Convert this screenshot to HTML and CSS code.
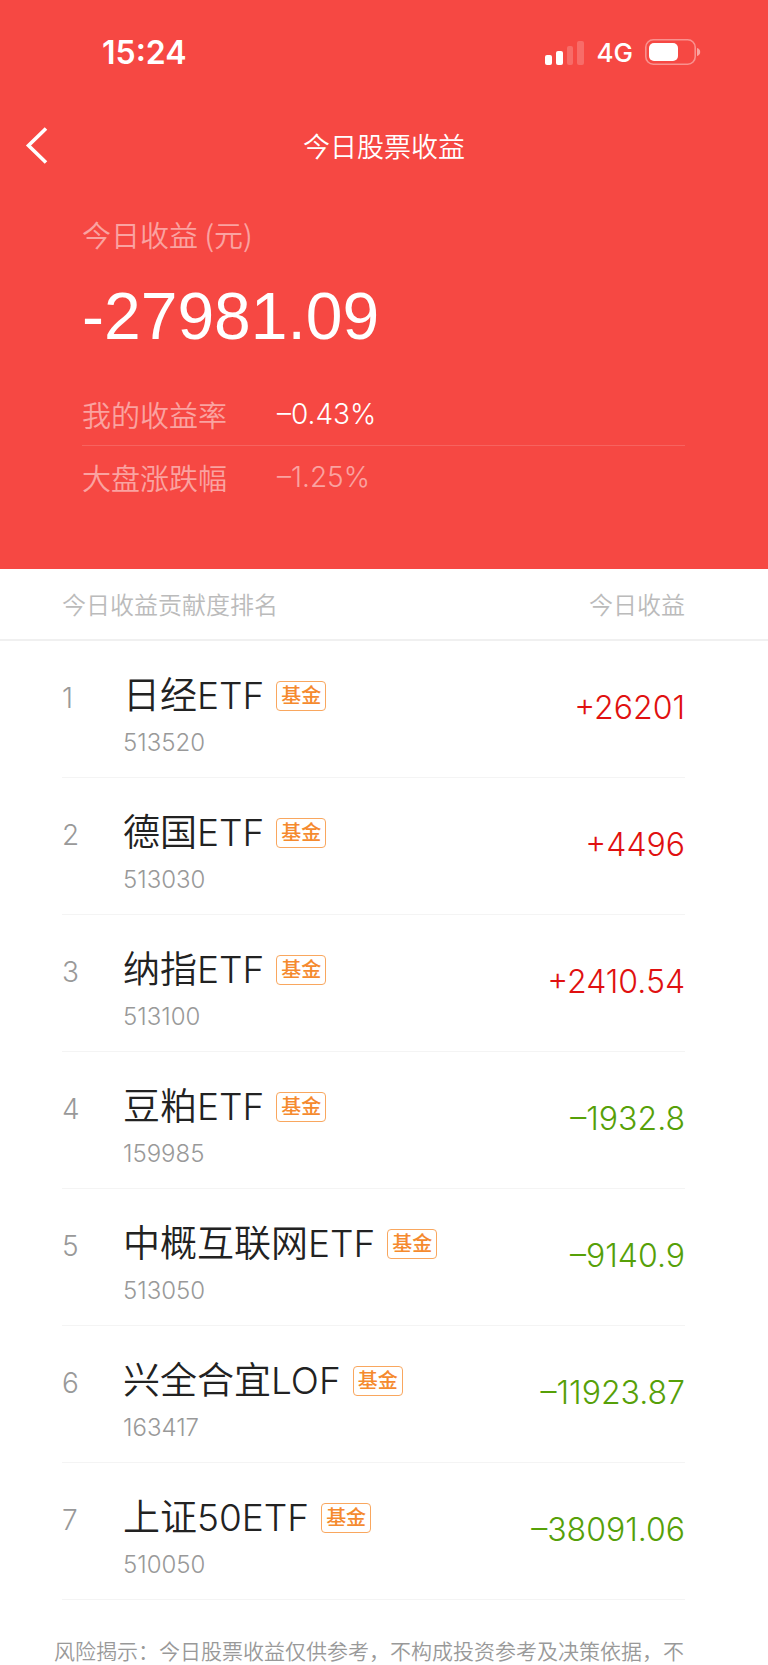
FILE: index.html
```html
<!DOCTYPE html>
<html lang="zh-CN">
  <head>
    <meta charset="UTF-8" />
    <meta name="viewport" content="width=device-width, initial-scale=1" />
    <title>今日股票收益</title>
    <link rel="stylesheet" href="styles.css">
  </head>
  <body>
    <header class="hero">
      <div class="status-bar">
        <span class="time">15:24</span>
        <div class="status-icons">
          <svg class="signal" width="40" height="25" viewBox="0 0 40 25" fill="#fff">
            <rect x="0" y="15" width="7" height="10" rx="2" />
            <rect x="11" y="11" width="7" height="14" rx="2" />
            <rect x="22" y="6" width="6" height="19" rx="2" opacity="0.2" />
            <rect x="32" y="1" width="7" height="24" rx="2" opacity="0.2" />
          </svg>
          <span class="network">4G</span>
          <svg class="battery" width="56" height="26" viewBox="0 0 56 26">
            <rect x="0.8" y="0.8" width="49.4" height="24.4" rx="7.5" fill="none" stroke="#fff" stroke-width="1.6" opacity="0.4" />
            <rect x="4" y="4" width="29" height="18" rx="5" fill="#fff" />
            <path d="M52 9c2 .6 3.2 2 3.2 4S54 16.400 52 17z" fill="#fff" opacity="0.5" />
          </svg>
        </div>
      </div>
      <nav class="nav">
        <button class="back" type="button" aria-label="返回">
          <svg width="24" height="38" viewBox="0 0 24 38" fill="none" stroke="#fff" stroke-width="3.6">
            <path d="M21 2.500L3.500 19.500L21 36.500" />
          </svg>
        </button>
        <h1>今日股票收益</h1>
      </nav>
      <section class="summary">
        <p class="label">今日收益 (元)</p>
        <p class="total">-27981.09</p>
        <dl class="rates">
          <div class="rate">
            <dt>我的收益率</dt>
            <dd>–0.43%</dd>
          </div>
          <div class="rate muted">
            <dt>大盘涨跌幅</dt>
            <dd>–1.25%</dd>
          </div>
        </dl>
      </section>
    </header>
    <main>
      <table class="ranking">
        <thead>
          <tr>
            <th>今日收益贡献度排名</th>
            <th>今日收益</th>
          </tr>
        </thead>
        <tbody>
          <tr>
            <td class="rank">1</td>
            <td class="stock">
              <div class="name">日经ETF<span class="tag">基金</span></div>
              <div class="code">513520</div>
            </td>
            <td class="profit up">+26201</td>
          </tr>
          <tr>
            <td class="rank">2</td>
            <td class="stock">
              <div class="name">德国ETF<span class="tag">基金</span></div>
              <div class="code">513030</div>
            </td>
            <td class="profit up">+4496</td>
          </tr>
          <tr>
            <td class="rank">3</td>
            <td class="stock">
              <div class="name">纳指ETF<span class="tag">基金</span></div>
              <div class="code">513100</div>
            </td>
            <td class="profit up">+2410.54</td>
          </tr>
          <tr>
            <td class="rank">4</td>
            <td class="stock">
              <div class="name">豆粕ETF<span class="tag">基金</span></div>
              <div class="code">159985</div>
            </td>
            <td class="profit down">–1932.8</td>
          </tr>
          <tr>
            <td class="rank">5</td>
            <td class="stock">
              <div class="name">中概互联网ETF<span class="tag">基金</span></div>
              <div class="code">513050</div>
            </td>
            <td class="profit down">–9140.9</td>
          </tr>
          <tr>
            <td class="rank">6</td>
            <td class="stock">
              <div class="name">兴全合宜LOF<span class="tag">基金</span></div>
              <div class="code">163417</div>
            </td>
            <td class="profit down">–11923.87</td>
          </tr>
          <tr>
            <td class="rank">7</td>
            <td class="stock">
              <div class="name">上证50ETF<span class="tag">基金</span></div>
              <div class="code">510050</div>
            </td>
            <td class="profit down">–38091.06</td>
          </tr>
        </tbody>
      </table>
      <p class="notice">风险揭示：今日股票收益仅供参考，不构成投资参考及决策依据，不</p>
    </main>
  </body>
</html>
```

FILE: styles.css
```css
* {
  box-sizing: border-box;
}

body {
  margin: 0;
  font-family: Inter, "Noto Sans CJK SC", sans-serif;
  font-weight: 350;
  background-color: #fff;
  color: #222;
}

h1,
p,
dl,
dd {
  margin: 0;
}

.hero {
  background-color: #f64843;
  color: #fff;
  padding-bottom: 62px;
}

.status-bar {
  display: flex;
  justify-content: space-between;
  align-items: center;
  height: 104px;
  padding: 0 67px 0 102px;
}

.time {
  font-size: 32px;
  font-weight: 600;
}

.status-icons {
  display: flex;
  align-items: center;
  gap: 12px;
}

.network {
  font-size: 26px;
  font-weight: 500;
  line-height: 26px;
  padding-top: 2px;
}

.nav {
  display: grid;
  grid-template-columns: 80px 1fr 80px;
  align-items: center;
  height: 82px;
}

.back {
  display: flex;
  align-items: center;
  height: 82px;
  padding: 0 0 0 25px;
  border: none;
  background: none;
  cursor: pointer;
}

.nav h1 {
  font-size: 27px;
  font-weight: 350;
  text-align: center;
}

.summary {
  padding: 28px 83px 0 82px;
}

.label {
  font-family: "Noto Sans CJK SC", sans-serif;
  font-size: 29px;
  line-height: 40px;
  color: rgba(255, 255, 255, 0.5);
}

.total {
  margin-top: 24px;
  font-family: "Liberation Sans", sans-serif;
  font-size: 66px;
  line-height: 76px;
}

.rates {
  margin-top: 29px;
}

.rate {
  display: flex;
  align-items: center;
  height: 62px;
}

.rate + .rate {
  border-top: 1px solid rgba(255, 255, 255, 0.15);
}

.rate dt {
  width: 195px;
  font-size: 29px;
  color: rgba(255, 255, 255, 0.5);
}

.rate dd {
  font-size: 28px;
}

.rate.muted dd {
  color: rgba(255, 255, 255, 0.5);
}

.ranking,
.ranking thead,
.ranking tbody {
  display: block;
}

.ranking tr {
  display: flex;
}

.ranking th,
.ranking td {
  padding: 0;
}

.ranking thead tr {
  justify-content: space-between;
  align-items: center;
  height: 72px;
  padding: 0 83px 2px 62px;
  border-bottom: 2px solid #f0f0f0;
}

.ranking th {
  font-size: 24px;
  font-weight: 350;
  color: #bbb;
}

.ranking tbody {
  padding: 0 83px 0 62px;
}

.ranking tbody tr {
  height: 137px;
  padding-top: 31px;
  border-bottom: 1px solid #f4f4f4;
}

.rank {
  width: 61px;
  font-size: 28px;
  line-height: 52px;
  color: #999;
}

.stock {
  flex: 1;
}

.name {
  display: flex;
  align-items: center;
  font-size: 37px;
  line-height: 48px;
}

.tag {
  margin-left: 12px;
  padding: 0 4px;
  border: 1px solid #f9a75f;
  border-radius: 4px;
  font-size: 20px;
  font-weight: 500;
  line-height: 28px;
  color: #f58a2e;
}

.code {
  margin-top: 8px;
  font-size: 24px;
  line-height: 30px;
  color: #999;
}

.profit {
  font-size: 32px;
  line-height: 72px;
}

.up {
  color: #e01010;
}

.down {
  color: #56a008;
}

.notice {
  padding: 39px 54px 0;
  font-size: 21px;
  line-height: 26px;
  color: #999;
}
```
